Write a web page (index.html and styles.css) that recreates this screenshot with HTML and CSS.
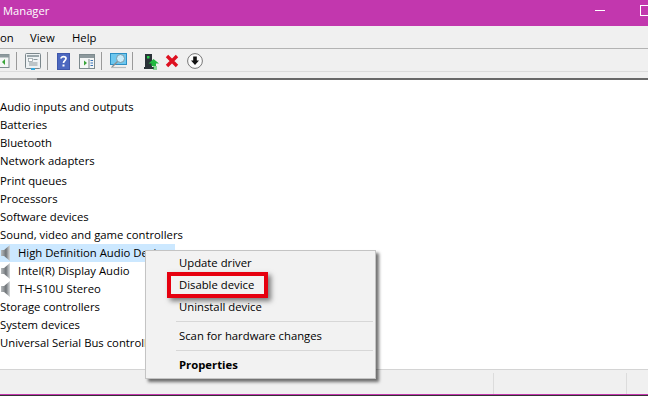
FILE: index.html
```html
<!DOCTYPE html>
<html lang="en">
<head>
<meta charset="utf-8">
<title>Device Manager</title>
<link rel="stylesheet" href="styles.css">
</head>
<body>
<div class="window">
  <header class="titlebar">
    <span class="title">Manager</span>
    <span class="minimize"></span>
    <span class="maximize"></span>
  </header>
  <nav class="menubar"><span class="m1">on</span><span class="m2">View</span><span class="m3">Help</span></nav>
  <div class="toolbar">
    <svg class="ti t-back" width="10" height="16" viewBox="0 0 10 16"><rect x="-6" y="1.5" width="15" height="13" fill="#f4f6f6" stroke="#7d8a8e"/><rect x="-6" y="1.5" width="15" height="3" fill="#8d999d"/><path d="M2 9 5 6v6z" fill="#3aa53a"/></svg>
    <i class="sep s1"></i>
    <svg class="ti t-doc" width="16" height="17" viewBox="0 0 16 17"><rect x=".5" y=".5" width="15" height="15" rx="1" fill="#eef2f4" stroke="#7b878c"/><rect x="2" y="2" width="12" height="2" fill="#9aa6ab"/><rect x="3.5" y="5.5" width="4" height="3" fill="#fff" stroke="#8b979c" stroke-width=".7"/><path d="M8.5 6.5h4M4 10h8.500M4 12h8.500" stroke="#8b979c"/><rect x="6" y="15" width="4" height="2" fill="#35a7dc"/></svg>
    <i class="sep s2"></i>
    <svg class="ti t-help" width="13" height="17" viewBox="0 0 13 17"><rect width="13" height="17" fill="#3f57ab"/><rect x="1" y="1" width="11" height="15" fill="#4c68c0"/><path d="M4 5.500C4 3 9 3 9 5.500c0 2-2.500 2.200-2.500 4.500" fill="none" stroke="#fff" stroke-width="1.700"/><rect x="5.500" y="11.500" width="2" height="2" fill="#fff"/></svg>
    <svg class="ti t-panel" width="16" height="15" viewBox="0 0 16 15"><rect x=".5" y=".5" width="15" height="14" fill="#f4f6f6" stroke="#7d8a8e"/><rect x="1" y="1" width="14" height="3" fill="#8d999d"/><path d="M5 6.500 8 9 5 11.500z" fill="#3aa53a"/><path d="M10 5v9" stroke="#7d8a8e"/><path d="M11.500 6.500h2.500M11.500 9h2.500M11.500 11.500h2.500" stroke="#3a74b8" stroke-width="1.200"/></svg>
    <i class="sep s3"></i>
    <svg class="ti t-scan" width="17" height="16" viewBox="0 0 17 16"><rect x=".5" y=".5" width="16" height="11" fill="#6cc7ef" stroke="#2c8fc4"/><circle cx="10.500" cy="5.500" r="4" fill="#c9ecfa" stroke="#7d9aa8"/><path d="M7.500 8.500 2 14" stroke="#8a8f92" stroke-width="1.500"/><path d="M1 14.500h15" stroke="#b6bcbf" stroke-width="1.200"/></svg>
    <i class="sep s4"></i>
    <svg class="ti t-driver" width="15" height="17" viewBox="0 0 15 17"><path d="M1 1h7v13h2v2H0v-2h1z" fill="#2b3338"/><rect x="3" y="3" width="2.500" height="2.500" fill="#25d04a"/><path d="M9.500 6 15 10.500h-3V13H7.500v-2.500H4.500z" fill="#21b83f"/><path d="M9 14h4M9 16h4" stroke="#21b83f" stroke-width="1.200"/></svg>
    <svg class="ti t-x" width="14" height="14" viewBox="0 0 14 14"><path d="M2 2l10 10M12 2 2 12" stroke="#de1020" stroke-width="3.400"/></svg>
    <svg class="ti t-down" width="16" height="16" viewBox="0 0 16 16"><circle cx="8" cy="8" r="7.400" fill="#fafafa" stroke="#777"/><path d="M6.200 3.500h3.600v4H12L8 12 4 7.500h2.200z" fill="#111"/></svg>
  </div>
  <div class="rule"></div>
  <main class="tree">
    <div class="row">Audio inputs and outputs</div>
    <div class="row">Batteries</div>
    <div class="row">Bluetooth</div>
    <div class="row">Network adapters</div>
    <div class="row row-gap">Print queues</div>
    <div class="row">Processors</div>
    <div class="row">Software devices</div>
    <div class="row">Sound, video and game controllers</div>
    <div class="row child selected">
      <svg class="spk" width="13" height="16" viewBox="0 0 13 16"><defs><linearGradient id="cone" x1="0" x2="1" y1="0" y2="0"><stop offset="0" stop-color="#b8bcbe"/><stop offset=".55" stop-color="#6f7478"/><stop offset="1" stop-color="#d8dbdd"/></linearGradient></defs><path d="M1 5h3L10 0v16L4 11H1z" fill="url(#cone)"/></svg>
      <span>High Definition Audio Device</span>
    </div>
    <div class="row child">
      <svg class="spk" width="13" height="16" viewBox="0 0 13 16"><path d="M1 5h3L10 0v16L4 11H1z" fill="url(#cone)"/></svg>
      <span>Intel(R) Display Audio</span>
    </div>
    <div class="row child">
      <svg class="spk" width="13" height="16" viewBox="0 0 13 16"><path d="M1 5h3L10 0v16L4 11H1z" fill="url(#cone)"/></svg>
      <span>TH-S10U Stereo</span>
    </div>
    <div class="row">Storage controllers</div>
    <div class="row">System devices</div>
    <div class="row">Universal Serial Bus controllers</div>
  </main>
  <footer class="statusbar"><i class="cell c1"></i><i class="cell c2"></i></footer>
  <div class="accent"></div>
</div>
<div class="context">
  <div class="item">Update driver</div>
  <div class="item">Disable device</div>
  <div class="item">Uninstall device</div>
  <hr class="divider">
  <div class="item">Scan for hardware changes</div>
  <hr class="divider">
  <div class="item bold">Properties</div>
</div>
<div class="highlight"></div>
</body>
</html>
```

FILE: styles.css
```css
html, body { margin: 0; padding: 0; height: 100%; background: #fff; overflow: hidden; }
body { font-family: "Open Sans", "Noto Sans", sans-serif; font-size: 11.3px; color: #000; position: relative; }
.window { display: flex; flex-direction: column; height: 400px; }
.titlebar { flex: 0 0 26px; background: #c237ae; color: #fff; display: flex; align-items: flex-start; position: relative; }
.title { margin: 2px 0 0 3px; font-size: 11.2px; line-height: 17px; }
.minimize { position: absolute; left: 595px; top: 10px; width: 10px; height: 1px; background: #fff; }
.maximize { position: absolute; left: 640px; top: 5px; width: 10px; height: 9px; border: 1px solid #fff; }
.menubar { flex: 0 0 23px; box-sizing: border-box; background: #f0f0f0; border-bottom: 1px solid #b3b3b3; display: flex; align-items: center; }
.m1 { width: 30px; }
.m2 { width: 42px; }
.toolbar { flex: 0 0 23px; box-sizing: border-box; background: #f0f0f0; border-bottom: 1px solid #dcdcdc; display: flex; align-items: center; padding-top: 2px; }
.ti { flex: none; display: block; }
.sep { flex: none; width: 1px; height: 18px; background: #9a9a9a; }
.s1 { margin-left: 6px; }
.t-doc { margin-left: 8px; }
.s2 { margin-left: 6px; }
.t-help { margin-left: 9px; }
.t-panel { margin-left: 9px; }
.s3 { margin-left: 6px; }
.t-scan { margin-left: 8px; }
.s4 { margin-left: 5px; }
.t-driver { margin-left: 11px; }
.t-x { margin-left: 6px; }
.t-down { margin-left: 8px; }
.rule { flex: 0 0 8px; box-sizing: border-box; background: #f0f0f0; position: relative; }
.rule::after { content: ""; position: absolute; left: 0; right: 0; bottom: 0; height: 2px; background: linear-gradient(to right, #a9a9a9 37px, #696969 37px); }
.tree { flex: 0 0 289px; background: #fff; padding-top: 18px; box-sizing: border-box; }
.row { height: 18px; line-height: 18px; white-space: nowrap; }
.row-gap { margin-top: 2px; }
.child { display: flex; align-items: center; gap: 5px; width: 175px; overflow: hidden; }
.selected { background: #cce8ff; }
.spk { flex: none; }
.statusbar { flex: 0 0 25px; box-sizing: border-box; background: #f0f0f0; border-top: 1px solid #d4d4d4; position: relative; display: flex; }
.cell { flex: none; width: 1px; margin-top: 3px; background: #dcdcdc; }
.c1 { margin-left: 493px; }
.c2 { margin-left: 132px; }
.accent { flex: 0 0 2px; box-sizing: border-box; background: #c237ae; border-bottom: 1px solid #333; }
.context { position: absolute; left: 145px; top: 250px; width: 229px; height: 126px; padding: 1px 0 0; background: #f2f2f2; border: 1px solid #c4c4c4; box-shadow: 3px 3px 3px rgba(0,0,0,.55); }
.item { height: 22px; line-height: 22px; padding-left: 33px; white-space: nowrap; }
.bold { font-weight: 700; }
.divider { margin: 3px 2px 3px 30px; border: 0; border-top: 1px solid #d7d7d7; height: 0; }
.highlight { position: absolute; left: 167px; top: 272px; width: 93px; height: 18px; border: 4px solid #e6000f; box-shadow: 3px 3px 5px rgba(0,0,0,.5); }
```
